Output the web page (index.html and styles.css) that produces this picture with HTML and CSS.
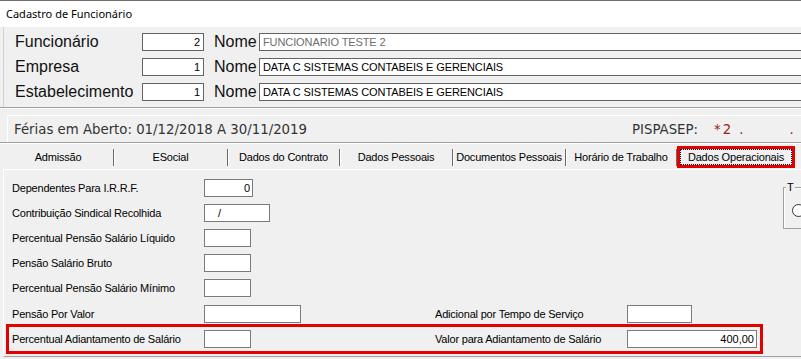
FILE: index.html
```html
<!DOCTYPE html>
<html lang="pt-BR">
<head>
    <meta charset="UTF-8">
    <title>Cadastro de Funcionário</title>
    <link rel="stylesheet" href="styles.css">
</head>
<body>
    <div class="window">
        <div class="titlebar">Cadastro de Funcionário</div>

        <div class="header">
            <div class="hrow">
                <span class="hlabel">Funcionário</span>
                <span class="field num">2</span>
                <span class="nome">Nome</span>
                <span class="field name disabled">FUNCIONARIO TESTE 2</span>
            </div>
            <div class="hrow">
                <span class="hlabel">Empresa</span>
                <span class="field num">1</span>
                <span class="nome">Nome</span>
                <span class="field name">DATA C SISTEMAS CONTABEIS E GERENCIAIS</span>
            </div>
            <div class="hrow">
                <span class="hlabel">Estabelecimento</span>
                <span class="field num">1</span>
                <span class="nome">Nome</span>
                <span class="field name">DATA C SISTEMAS CONTABEIS E GERENCIAIS</span>
            </div>
        </div>
        <div class="sep"></div>

        <div class="ferias">
            <span class="ferias-text">Férias em Aberto: 01/12/2018 A 30/11/2019</span>
            <span class="pis">PISPASEP:</span>
            <span class="pis-val">*2 .<span class="pis-dot">.</span></span>
        </div>
        <div class="sep"></div>

        <div class="tabs">
            <span class="tab w111">Admissão</span>
            <span class="tab w114">ESocial</span>
            <span class="tab w112">Dados do Contrato</span>
            <span class="tab w113">Dados Pessoais</span>
            <span class="tab w113">Documentos Pessoais</span>
            <span class="tab w111">Horário de Trabalho</span>
            <span class="tab-active">Dados Operacionais</span>
        </div>

        <div class="panel">
            <div class="form">
                <span class="label">Dependentes Para I.R.R.F.</span>
                <span><span class="input w49 right">0</span></span>
                <span></span><span></span>

                <span class="label">Contribuição Sindical Recolhida</span>
                <span><span class="input w66 mask">/</span></span>
                <span></span><span></span>

                <span class="label">Percentual Pensão Salário Líquido</span>
                <span><span class="input w47"></span></span>
                <span></span><span></span>

                <span class="label">Pensão Salário Bruto</span>
                <span><span class="input w47"></span></span>
                <span></span><span></span>

                <span class="label">Percentual Pensão Salário Mínimo</span>
                <span><span class="input w47"></span></span>
                <span></span><span></span>

                <span class="label low">Pensão Por Valor</span>
                <span class="low"><span class="input w97"></span></span>
                <span class="label low">Adicional por Tempo de Serviço</span>
                <span class="low"><span class="input w65"></span></span>

                <span class="label low">Percentual Adiantamento de Salário</span>
                <span class="low"><span class="input w47"></span></span>
                <span class="label low">Valor para Adiantamento de Salário</span>
                <span class="low"><span class="input w130 right">400,00</span></span>
            </div>

            <div class="groupbox">
                <span class="group-title">T</span>
                <span class="radio"></span>
            </div>

            <div class="mark"></div>
        </div>
    </div>
</body>
</html>
```

FILE: styles.css
```css
body {
    margin: 0;
    background-color: #f0f0f0;
    font-family: "Liberation Sans", Arial, sans-serif;
    color: #000;
}
.window {
    width: 801px;
    height: 359px;
    overflow: hidden;
    background-color: #f0f0f0;
}
.titlebar {
    height: 26px;
    line-height: 26px;
    border-top: 1px solid #6e6e6e;
    background: #fff;
    padding-left: 6px;
    font-family: "Noto Sans", sans-serif;
    font-size: 11px;
}

/* cabeçalho */
.header {
    margin-left: 3px;
    border-left: 1px solid #d2d2d2;
    padding: 6px 0 6px 11px;
    display: flex;
    flex-direction: column;
    gap: 7px;
}
.hrow {
    display: flex;
    align-items: center;
    height: 18px;
}
.hlabel {
    width: 127px;
    flex: none;
    font-size: 16px;
    color: #111;
}
.nome {
    width: 45px;
    flex: none;
    margin-left: 10px;
    font-size: 16px;
    color: #111;
}
.field {
    box-sizing: border-box;
    height: 18px;
    line-height: 16px;
    border: 1px solid #646464;
    background: #fff;
    padding: 0 3px;
    font-size: 11px;
    letter-spacing: -0.1px;
    white-space: nowrap;
    flex: none;
}
.num {
    width: 62px;
    text-align: right;
}
.name {
    width: 560px;
}
.disabled {
    color: #6d6d6d;
}
.sep {
    height: 1px;
    background: #a0a0a0;
    border-bottom: 1px solid #fff;
}

/* ferias */
.ferias {
    box-sizing: border-box;
    height: 27px;
    margin: 6px 0 0 7px;
    border-top: 1px solid #fff;
    border-left: 1px solid #fff;
    padding-left: 6px;
    display: flex;
    align-items: center;
    font-family: "DejaVu Sans", sans-serif;
    font-size: 13.3px;
    color: #333;
    white-space: nowrap;
}
.ferias-text {
    width: 618px;
    flex: none;
}
.pis {
    width: 82px;
    flex: none;
}
.pis-val {
    color: #a01818;
    letter-spacing: 2px;
}
.pis-dot {
    margin-left: 44px;
}

/* abas */
.tabs {
    box-sizing: border-box;
    height: 25px;
    padding: 5px 0 0 3px;
    display: flex;
    align-items: flex-start;
    font-size: 11px;
    letter-spacing: -0.2px;
}
.tab {
    box-sizing: border-box;
    height: 17px;
    line-height: 16px;
    text-align: center;
    border-right: 1px solid #696969;
    box-shadow: 1px 0 0 #fff;
    flex: none;
}
.w111 { width: 111px; }
.w112 { width: 112px; }
.w113 { width: 113px; }
.w114 { width: 114px; }
.tab-active {
    box-sizing: border-box;
    width: 112px;
    height: 16px;
    line-height: 14px;
    margin-left: 3px;
    text-align: center;
    border: 1px dotted #000;
    outline: 3px solid #e30000;
    flex: none;
}

/* painel */
.panel {
    position: relative;
    box-sizing: border-box;
    height: 188px;
    margin-left: 3px;
    border-top: 1px solid #fff;
    border-left: 1px solid #fff;
    border-bottom: 1px solid #a0a0a0;
    padding: 9px 0 0 8px;
    display: flex;
    align-items: flex-start;
}
.form {
    display: grid;
    grid-template-columns: 192px 231px 192px 130px;
    grid-auto-rows: 18px;
    row-gap: 7px;
    flex: none;
    font-size: 11px;
    letter-spacing: -0.2px;
}
.low {
    margin-top: 1px;
}
.label {
    line-height: 18px;
    white-space: nowrap;
}
.input {
    display: block;
    box-sizing: border-box;
    height: 18px;
    line-height: 16px;
    border: 1px solid #7a7a7a;
    background: #fff;
    padding: 0 2px;
    letter-spacing: 0;
}
.right { text-align: right; }
.mask { padding-left: 13px; }
.w47 { width: 47px; }
.w49 { width: 49px; }
.w65 { width: 65px; }
.w66 { width: 66px; }
.w97 { width: 97px; }
.w130 { width: 130px; }

.groupbox {
    position: relative;
    box-sizing: border-box;
    width: 60px;
    height: 42px;
    margin: 8px 0 0 26px;
    border: 1px solid #a0a0a0;
    box-shadow: inset 1px 1px 0 #fff;
    flex: none;
}
.group-title {
    position: absolute;
    top: -7px;
    left: 2px;
    padding: 0 1px;
    background: #f0f0f0;
    font-size: 11px;
}
.radio {
    position: absolute;
    top: 16px;
    left: 8px;
    width: 11px;
    height: 11px;
    border: 1px solid #333;
    border-radius: 50%;
    background: #fff;
}

/* destaque vermelho */
.mark {
    position: absolute;
    left: 2px;
    top: 154px;
    box-sizing: border-box;
    width: 757px;
    height: 30px;
    border: 3px solid #e30000;
}
```
